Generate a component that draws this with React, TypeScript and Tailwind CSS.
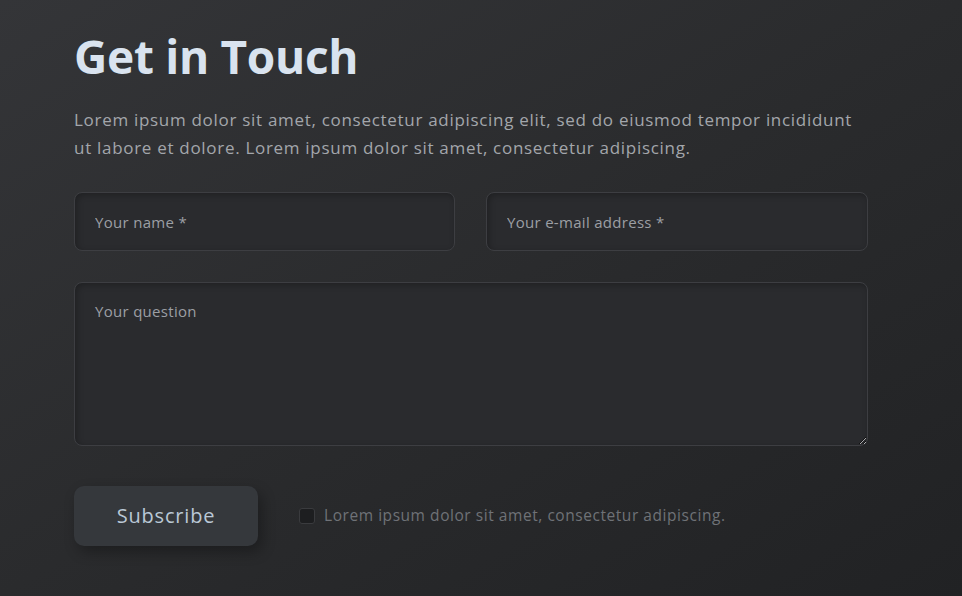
import { useState } from 'react';

export default function App() {
  const [agree, setAgree] = useState(false);

  return (
    <div className="min-h-[596px] w-full bg-gradient-to-br from-[#343538] via-[#2a2b2d] to-[#212224] font-['Open_Sans',sans-serif]">
      <div className="w-[794px] ml-[74px] pt-[26px]">
        <h1 className="text-[46px] leading-[60px] font-bold tracking-[-0.3px] text-[#d9e3ef]">Get in Touch</h1>

        <p className="mt-[20px] text-[17px] leading-[28px] tracking-[0.7px] text-[#a3a6ab]">
          Lorem ipsum dolor sit amet, consectetur adipiscing elit, sed do eiusmod tempor incididunt ut labore et dolore. Lorem ipsum dolor sit amet, consectetur adipiscing.
        </p>

        <form className="mt-[30px]" onSubmit={(e) => e.preventDefault()}>
          <div className="flex gap-[31px]">
            <input
              type="text"
              placeholder="Your name *"
              className="h-[59px] w-[381px] rounded-[8px] border border-[#3d3e42] bg-[#2a2b2e] px-[20px] text-[15px] tracking-[0.3px] text-[#c9ccd0] placeholder:text-[#9c9fa4] shadow-[inset_2px_2px_6px_rgba(0,0,0,0.25)] outline-none"
            />
            <input
              type="email"
              placeholder="Your e-mail address *"
              className="h-[59px] flex-1 rounded-[8px] border border-[#3d3e42] bg-[#2a2b2e] px-[20px] text-[15px] tracking-[0.3px] text-[#c9ccd0] placeholder:text-[#9c9fa4] shadow-[inset_2px_2px_6px_rgba(0,0,0,0.25)] outline-none"
            />
          </div>

          <textarea
            placeholder="Your question"
            className="mt-[31px] block h-[164px] w-full rounded-[8px] border border-[#3d3e42] bg-[#2a2b2e] px-[20px] py-[17px] text-[15px] tracking-[0.3px] text-[#c9ccd0] placeholder:text-[#9c9fa4] shadow-[inset_2px_2px_6px_rgba(0,0,0,0.25)] outline-none"
          />

          <div className="mt-[40px] flex items-center">
            <button
              type="submit"
              className="h-[60px] w-[184px] rounded-[10px] bg-[#35383c] text-[20px] font-medium tracking-[0.8px] text-[#bac8d6] shadow-[4px_6px_14px_rgba(0,0,0,0.3)]"
            >
              Subscribe
            </button>
            <label className="ml-[41px] flex items-center gap-[9px] text-[15.5px] tracking-[0.55px] text-[#6f7277]">
              <input
                type="checkbox"
                checked={agree}
                onChange={(e) => setAgree(e.target.checked)}
                className="h-[16px] w-[16px] appearance-none rounded-[3px] border border-[#3a3b3e] bg-[#1d1e20]"
              />
              Lorem ipsum dolor sit amet, consectetur adipiscing.
            </label>
          </div>
        </form>
      </div>
    </div>
  );
}
